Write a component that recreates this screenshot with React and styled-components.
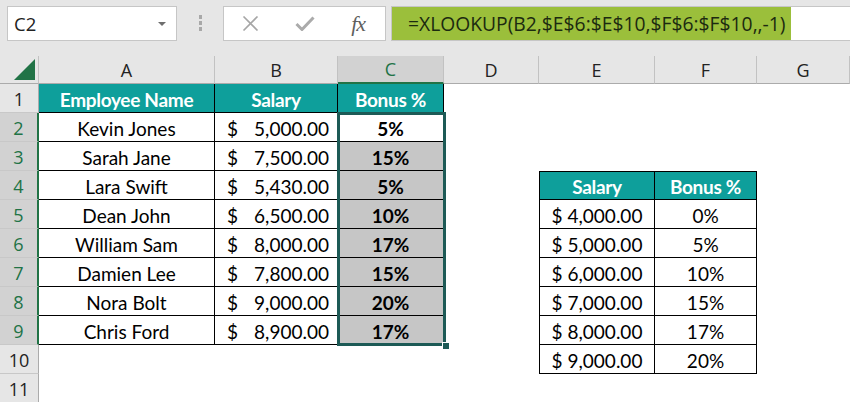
import React from 'react';
import styled, { createGlobalStyle, css } from 'styled-components';

const TEAL = '#0e9f9b';
const XL_GREEN = '#217346';
const SEL = '#1d5a56';
const HEAD_BG = '#e6e6e6';
const HEAD_SEL = '#d2d2d2';

const GlobalStyle = createGlobalStyle`
  html, body { margin: 0; padding: 0; background: #fff; }
  body {
    width: 850px;
    height: 402px;
    overflow: hidden;
    font-family: "Open Sans", "Noto Sans", sans-serif;
  }
`;

const Toolbar = styled.div`
  display: flex;
  align-items: flex-start;
  box-sizing: border-box;
  height: 56px;
  padding: 6px 0 0 7px;
  background: ${HEAD_BG};
`;

const NameBox = styled.div`
  box-sizing: border-box;
  width: 170px;
  height: 35px;
  display: flex;
  align-items: center;
  justify-content: space-between;
  padding: 0 10px 0 6px;
  background: #fff;
  border: 1px solid #c6c6c6;
  font-size: 18.5px;
  color: #222;
`;

const Caret = styled.span`
  width: 0;
  height: 0;
  border-left: 4px solid transparent;
  border-right: 4px solid transparent;
  border-top: 4px solid #6e6e6e;
`;

const Grip = styled.div`
  width: 46px;
  display: flex;
  flex-direction: column;
  align-items: center;
  gap: 2px;
  padding-top: 9px;
`;

const Dot = styled.span`
  width: 3px;
  height: 4px;
  background: #a8a8a8;
`;

const FxBox = styled.div`
  box-sizing: border-box;
  width: 163px;
  height: 35px;
  display: flex;
  background: #fff;
  border: 1px solid #c6c6c6;
`;

const FxSlot = styled.div`
  flex: 1;
  display: flex;
  align-items: center;
  justify-content: center;
`;

const FxGlyph = styled.span`
  font-family: "Liberation Serif", "DejaVu Serif", serif;
  font-style: italic;
  font-size: 22px;
  color: #5f5f5f;
  letter-spacing: -1px;
`;

const FormulaBox = styled.div`
  box-sizing: border-box;
  flex: 1;
  height: 35px;
  margin-left: 5px;
  display: flex;
  background: #fff;
  border: 1px solid #c6c6c6;
  border-right: none;
`;

const Highlight = styled.span`
  display: flex;
  align-items: center;
  padding: 0 5px 0 16px;
  background: #9bbf3b;
  color: #1c2a10;
  font-size: 19.3px;
  white-space: nowrap;
`;

const Sheet = styled.div`
  display: grid;
  grid-template-columns: 39px 176px 123px 106px 95px 116px 102px 1fr;
  grid-template-rows: 28px repeat(11, 29px);
`;

const Placed = css`
  grid-row: ${p => p.$r};
  grid-column: ${p => p.$c};
  box-sizing: border-box;
`;

const Corner = styled.div`
  ${Placed}
  display: flex;
  align-items: flex-end;
  justify-content: flex-end;
  padding: 0 3px 3px 0;
  background: ${HEAD_BG};
  border-right: 1px solid #c2c2c2;
  border-bottom: 1px solid #ababab;
  &::before {
    content: '';
    width: 0;
    height: 0;
    border-left: 21px solid transparent;
    border-bottom: 21px solid ${XL_GREEN};
  }
`;

const ColHead = styled.div`
  ${Placed}
  display: flex;
  align-items: center;
  justify-content: center;
  font-size: 18px;
  color: ${p => (p.$sel ? XL_GREEN : '#222')};
  background: ${p => (p.$sel ? HEAD_SEL : HEAD_BG)};
  border-right: 1px solid #c2c2c2;
  border-bottom: ${p => (p.$sel ? `2px solid ${XL_GREEN}` : '1px solid #ababab')};
`;

const RowHead = styled.div`
  ${Placed}
  display: flex;
  align-items: center;
  justify-content: center;
  font-size: 18px;
  padding-top: 1px;
  color: ${p => (p.$sel ? XL_GREEN : '#222')};
  background: ${p => (p.$sel ? HEAD_SEL : HEAD_BG)};
  border-bottom: 1px solid #c8c8c8;
  border-right: ${p => (p.$sel ? `2px solid ${XL_GREEN}` : '1px solid #ababab')};
`;

const Cell = styled.div`
  ${Placed}
  display: flex;
  align-items: center;
  justify-content: ${p => p.$align || 'center'};
  padding: 2px 8px 0 ${p => (p.$money ? '12px' : '8px')};
  font-family: "Lato", "Carlito", sans-serif;
  font-size: 19px;
  white-space: nowrap;
  overflow: hidden;
  color: ${p => (p.$head ? '#fff' : '#000')};
  font-weight: ${p => (p.$head || p.$bold ? 700 : 400)};
  letter-spacing: ${p => (p.$head ? '-0.3px' : '0')};
  background: ${p => (p.$head ? TEAL : p.$shade ? '#c6c6c6' : '#fff')};
  ${p => p.$boxed && css`
    border-right: 1px solid #000;
    border-bottom: 1px solid #000;
  `}
  ${p => p.$left && css`border-left: 1px solid #000;`}
  ${p => p.$top && css`border-top: 1px solid #000;`}
`;

const Selection = styled.div`
  grid-row: 3 / 11;
  grid-column: 4;
  position: relative;
  z-index: 2;
  margin: -1px -2px -1px -1px;
  border: 3px solid ${SEL};
  pointer-events: none;
  &::after {
    content: '';
    position: absolute;
    right: -6px;
    bottom: -6px;
    width: 6px;
    height: 6px;
    background: ${SEL};
    border-left: 1px solid #fff;
    border-top: 1px solid #fff;
  }
`;

const employees = [
  ['Kevin Jones', '5,000.00', '5%'],
  ['Sarah Jane', '7,500.00', '15%'],
  ['Lara Swift', '5,430.00', '5%'],
  ['Dean John', '6,500.00', '10%'],
  ['William Sam', '8,000.00', '17%'],
  ['Damien Lee', '7,800.00', '15%'],
  ['Nora Bolt', '9,000.00', '20%'],
  ['Chris Ford', '8,900.00', '17%'],
];

const bonusTable = [
  ['4,000.00', '0%'],
  ['5,000.00', '5%'],
  ['6,000.00', '10%'],
  ['7,000.00', '15%'],
  ['8,000.00', '17%'],
  ['9,000.00', '20%'],
];

const letters = ['A', 'B', 'C', 'D', 'E', 'F', 'G'];

function rowCells(row) {
  const r = row + 1;
  const cells = [];
  const blank = c => <Cell key={c} $r={r} $c={c} />;

  // table 1: A1:C9
  if (row === 1) {
    cells.push(<Cell key={2} $r={r} $c={2} $head $boxed>Employee Name</Cell>);
    cells.push(<Cell key={3} $r={r} $c={3} $head $boxed>Salary</Cell>);
    cells.push(<Cell key={4} $r={r} $c={4} $head $boxed>Bonus %</Cell>);
  } else if (row <= 9) {
    const [name, pay, bonus] = employees[row - 2];
    cells.push(<Cell key={2} $r={r} $c={2} $boxed>{name}</Cell>);
    cells.push(
      <Cell key={3} $r={r} $c={3} $boxed $money $align="space-between">
        <span>$</span>
        <span>{pay}</span>
      </Cell>
    );
    cells.push(<Cell key={4} $r={r} $c={4} $boxed $bold $shade={row > 2}>{bonus}</Cell>);
  } else {
    cells.push(blank(2), blank(3), blank(4));
  }

  cells.push(blank(5));

  // table 2: E4:F10
  if (row === 4) {
    cells.push(<Cell key={6} $r={r} $c={6} $head $boxed $left $top>Salary</Cell>);
    cells.push(<Cell key={7} $r={r} $c={7} $head $boxed $top>Bonus %</Cell>);
  } else if (row >= 5 && row <= 10) {
    const [pay, bonus] = bonusTable[row - 5];
    cells.push(<Cell key={6} $r={r} $c={6} $boxed $left>$ {pay}</Cell>);
    cells.push(<Cell key={7} $r={r} $c={7} $boxed>{bonus}</Cell>);
  } else {
    cells.push(blank(6), blank(7));
  }

  cells.push(blank(8));
  return cells;
}

export default function App() {
  const rows = Array.from({ length: 11 }, (_, i) => i + 1);
  return (
    <>
      <GlobalStyle />
      <Toolbar>
        <NameBox>
          C2
          <Caret />
        </NameBox>
        <Grip>
          <Dot />
          <Dot />
          <Dot />
        </Grip>
        <FxBox>
          <FxSlot>
            <svg width="17" height="15" viewBox="0 0 17 15">
              <path d="M1.5 0.5 L15.5 14.5 M15.5 0.5 L1.5 14.5" stroke="#a6a6a6" strokeWidth="1.6" fill="none" />
            </svg>
          </FxSlot>
          <FxSlot>
            <svg width="20" height="15" viewBox="0 0 20 15">
              <path d="M1.5 8 L7 13.5 L18.5 1.5" stroke="#ababab" strokeWidth="3" fill="none" />
            </svg>
          </FxSlot>
          <FxSlot>
            <FxGlyph>fx</FxGlyph>
          </FxSlot>
        </FxBox>
        <FormulaBox>
          <Highlight>=XLOOKUP(B2,$E$6:$E$10,$F$6:$F$10,,-1)</Highlight>
        </FormulaBox>
      </Toolbar>
      <Sheet>
        <Corner $r={1} $c={1} />
        {letters.map((l, i) => (
          <ColHead key={l} $r={1} $c={i + 2} $sel={l === 'C'}>{l}</ColHead>
        ))}
        {rows.map(row => (
          <React.Fragment key={row}>
            <RowHead $r={row + 1} $c={1} $sel={row >= 2 && row <= 9}>{row}</RowHead>
            {rowCells(row)}
          </React.Fragment>
        ))}
        <Selection />
      </Sheet>
    </>
  );
}
